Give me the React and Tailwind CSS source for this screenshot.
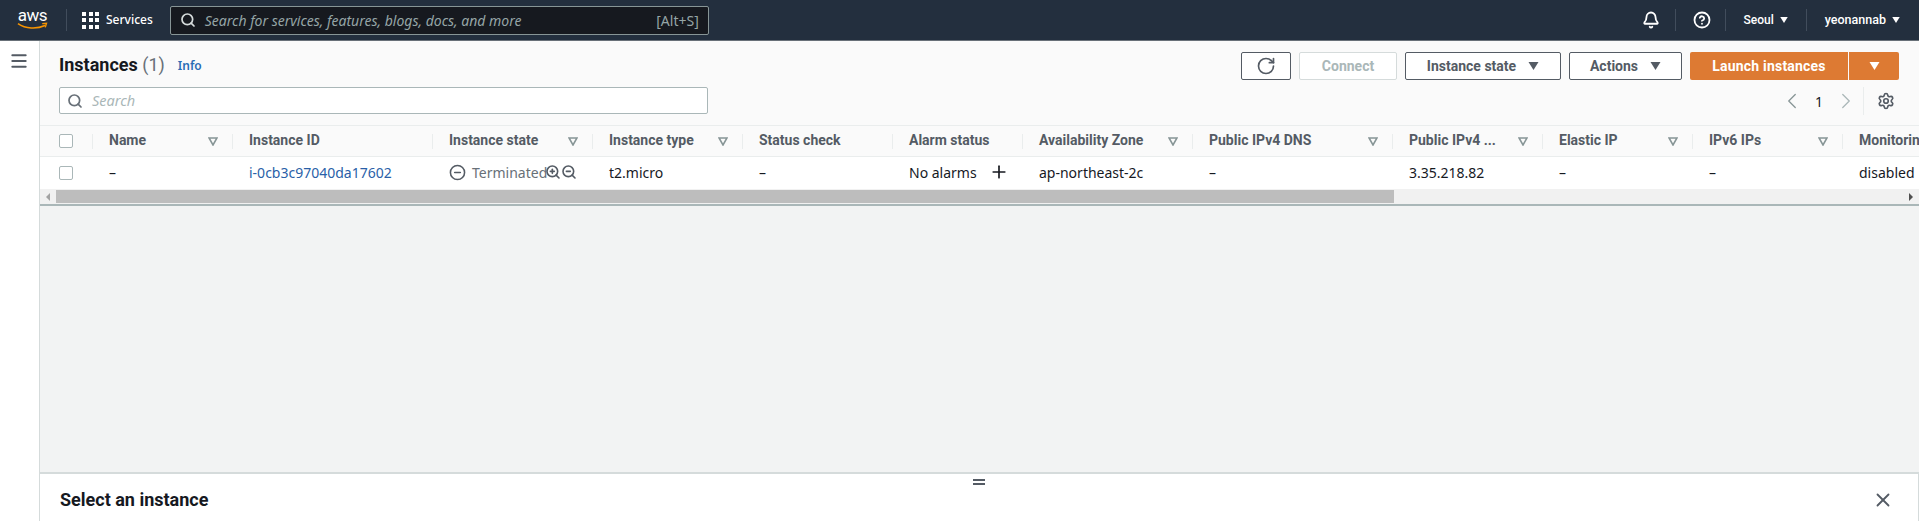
import { Bell, CircleHelp, CircleMinus, ChevronLeft, ChevronRight, Menu, Plus, RotateCw, Search, Settings, X, ZoomIn, ZoomOut } from 'lucide-react'

const columns = [
  { label: 'Name', w: 'w-[140px]', filter: true, cell: '–' },
  { label: 'Instance ID', w: 'w-[200px]', cell: 'i-0cb3c97040da17602', link: true },
  { label: 'Instance state', w: 'w-[160px]', filter: true, state: true },
  { label: 'Instance type', w: 'w-[150px]', filter: true, cell: 't2.micro' },
  { label: 'Status check', w: 'w-[150px]', cell: '–' },
  { label: 'Alarm status', w: 'w-[130px]', alarm: true },
  { label: 'Availability Zone', w: 'w-[170px]', filter: true, cell: 'ap-northeast-2c' },
  { label: 'Public IPv4 DNS', w: 'w-[200px]', filter: true, cell: '–' },
  { label: 'Public IPv4 ...', w: 'w-[150px]', filter: true, cell: '3.35.218.82' },
  { label: 'Elastic IP', w: 'w-[150px]', filter: true, cell: '–' },
  { label: 'IPv6 IPs', w: 'w-[150px]', filter: true, cell: '–' },
  { label: 'Monitoring', w: 'w-[150px]', cell: 'disabled' },
]

function Caret({ className }) {
  return (
    <svg viewBox="0 0 10 8" className={className} fill="currentColor">
      <path d="M0 0h10L5 8z" />
    </svg>
  )
}

function FilterIcon() {
  return (
    <svg viewBox="0 0 10 9" className="w-[10px] h-[9px] shrink-0 text-[#879596]" fill="none" stroke="currentColor" strokeWidth="1.6">
      <path d="M1 1h8L5 8z" />
    </svg>
  )
}

function Checkbox() {
  return <div className="w-[14px] h-[14px] rounded-[2px] border border-[#aab7b8] bg-white" />
}

function TopBar() {
  return (
    <header className="h-[41px] shrink-0 bg-[#232f3e] border-b border-[#687078] flex items-center text-white">
      <div className="w-[66px] shrink-0 flex justify-start pl-[17px]">
        <div className="relative w-[31px] h-[28px]">
          <span className="block text-center text-[17px] leading-[18px] tracking-[-0.5px] font-['Roboto',sans-serif]">aws</span>
          <svg viewBox="0 0 32 9" className="absolute left-0 top-[16px] w-[31px] h-[9px]" fill="none">
            <path d="M1 1.5C9 7 20 7.5 29 3.5" stroke="#f79400" strokeWidth="1.6" />
            <path d="M26 1.5l4.5-.3-1.3 4.2" stroke="#f79400" strokeWidth="1.4" />
          </svg>
        </div>
      </div>
      <div className="w-px h-[22px] bg-[#414d5c]" />
      <div className="ml-[15px] grid grid-cols-3 gap-[2.5px] w-[17px]">
        {[...Array(9)].map((_, i) => <div key={i} className="w-[4px] h-[4px] bg-white" />)}
      </div>
      <span className="ml-[7px] text-[12px] font-medium">Services</span>
      <div className="ml-[17px] w-[539px] h-[29px] rounded-[2px] border border-[#879596] bg-[#16191f] flex items-center pl-[9px] pr-[9px]">
        <Search size={16} strokeWidth={2.6} className="text-[#d5dbdb]" />
        <span className="ml-[9px] text-[14px] italic text-[#95a5a6]">Search for services, features, blogs, docs, and more</span>
        <span className="ml-auto text-[14px] text-[#95a5a6]">[Alt+S]</span>
      </div>
      <div className="ml-auto flex items-center h-[22px]">
        <Bell size={18} strokeWidth={2.4} />
        <div className="ml-[15px] w-px h-full bg-[#414d5c]" />
        <CircleHelp size={18} strokeWidth={2.4} className="ml-[17px]" />
        <div className="ml-[14px] w-px h-full bg-[#414d5c]" />
        <span className="ml-[18px] text-[12px] font-medium font-['Roboto',sans-serif]">Seoul</span>
        <Caret className="ml-[6px] w-[8px] h-[6px]" />
        <div className="ml-[18px] w-px h-full bg-[#414d5c]" />
        <span className="ml-[18px] text-[12.5px] font-medium font-['Roboto',sans-serif]">yeonannab</span>
        <Caret className="ml-[6px] mr-[19px] w-[8px] h-[6px]" />
      </div>
    </header>
  )
}

function OutlineButton({ children, className }) {
  return (
    <button className={`h-[28px] rounded-[2px] border border-[#545b64] bg-white text-[#545b64] text-[14px] font-bold font-['Roboto',sans-serif] flex items-center justify-center ${className}`}>
      {children}
    </button>
  )
}

function Toolbar() {
  return (
    <div className="h-[84px] shrink-0 bg-[#fafafa] pl-[19px] pr-[20px] pt-[11px] flex flex-col">
      <div className="flex items-center h-[28px]">
        <h1 className="text-[18px] leading-[26px] mb-[2px] font-bold text-[#16191f] font-['Roboto',sans-serif]">Instances <span className="font-normal text-[#687078]">(1)</span></h1>
        <a className="ml-[13px] text-[12px] font-semibold text-[#2a6db5]">Info</a>
        <div className="ml-auto flex items-center gap-[8px]">
          <OutlineButton className="w-[50px]"><RotateCw size={20} strokeWidth={2} /></OutlineButton>
          <button className="h-[28px] w-[98px] rounded-[2px] border border-[#d5dbdb] bg-white text-[#aab7b8] text-[14px] font-bold font-['Roboto',sans-serif]">Connect</button>
          <OutlineButton className="w-[156px] gap-[12px]">Instance state <Caret className="w-[11px] h-[8px]" /></OutlineButton>
          <OutlineButton className="w-[113px] gap-[12px]">Actions <Caret className="w-[11px] h-[8px]" /></OutlineButton>
          <div className="flex gap-px">
            <button className="h-[28px] w-[158px] rounded-l-[2px] bg-[#dd7a33] text-white text-[14px] font-bold font-['Roboto',sans-serif] tracking-[0.2px]">Launch instances</button>
            <button className="h-[28px] w-[50px] rounded-r-[2px] bg-[#dd7a33] text-white flex items-center justify-center"><Caret className="w-[11px] h-[8px]" /></button>
          </div>
        </div>
      </div>
      <div className="flex items-start mt-[7px]">
        <div className="w-[649px] h-[27px] rounded-[2px] border border-[#aab7b8] bg-white flex items-center pl-[7px]">
          <Search size={16} strokeWidth={2.6} className="text-[#687078]" />
          <span className="ml-[9px] text-[14.5px] italic text-[#aab7b8]">Search</span>
        </div>
        <div className="ml-auto flex items-center h-[28px]">
          <ChevronLeft size={26} strokeWidth={1.2} className="text-[#879596]" />
          <span className="ml-[8px] w-[12px] text-center text-[14px] text-[#16191f]">1</span>
          <ChevronRight size={26} strokeWidth={1.2} className="ml-[8px] text-[#aab7b8]" />
          <div className="ml-[4px] w-px h-full bg-[#eaeded]" />
          <Settings size={18} strokeWidth={2.2} className="ml-[13px] mr-[4px] text-[#545b64]" />
        </div>
      </div>
    </div>
  )
}

function InstanceTable() {
  return (
    <div className="shrink-0 overflow-hidden">
      <div className="h-[32px] flex items-center bg-[#fafafa] border-y border-[#eaeded]">
        <div className="w-[53px] shrink-0 h-[15px] pl-[19px] border-r border-[#eaeded] flex items-center"><Checkbox /></div>
        {columns.map((c) => (
          <div key={c.label} className={`${c.w} shrink-0 h-[15px] pl-[16px] pr-[14px] border-r border-[#eaeded] flex items-center justify-between`}>
            <span className="text-[14px] leading-[15px] font-bold text-[#545b64] whitespace-nowrap font-['Roboto',sans-serif] mb-[1px]">{c.label}</span>
            {c.filter && <FilterIcon />}
          </div>
        ))}
      </div>
      <div className="h-[32px] flex items-center bg-white text-[14px] text-[#16191f]">
        <div className="w-[53px] shrink-0 pl-[19px]"><Checkbox /></div>
        {columns.map((c) => (
          <div key={c.label} className={`${c.w} shrink-0 pl-[16px] pb-[2px] whitespace-nowrap flex items-center`}>
            {c.link && <span className="text-[#2a5fa8]">{c.cell}</span>}
            {c.state && (
              <>
                <CircleMinus size={17} strokeWidth={2.2} className="text-[#545b64]" />
                <span className="ml-[6px] text-[#687078]">Terminated</span>
                <ZoomIn size={16} strokeWidth={2.4} className="ml-[-2px] text-[#545b64]" />
                <ZoomOut size={16} strokeWidth={2.4} className="text-[#545b64]" />
              </>
            )}
            {c.alarm && (
              <>
                <span>No alarms</span>
                <Plus size={20} strokeWidth={2} className="ml-[12px]" />
              </>
            )}
            {!c.link && !c.state && !c.alarm && c.cell}
          </div>
        ))}
      </div>
      <div className="h-[17px] bg-[#f1f1f1] flex items-center border-b-2 border-[#aab7b8]">
        <div className="w-[16px] flex justify-center"><div className="border-y-[4px] border-r-[4px] border-y-transparent border-r-[#a3a3a3]" /></div>
        <div className="w-[1338px] h-[13px] bg-[#bdbdbd]" />
        <div className="ml-auto w-[16px] flex justify-center"><div className="border-y-[4px] border-l-[4px] border-y-transparent border-l-[#505050]" /></div>
      </div>
    </div>
  )
}

export default function App() {
  return (
    <div className="h-[521px] flex flex-col overflow-hidden bg-white font-['Noto_Sans',sans-serif]">
      <TopBar />
      <div className="flex flex-1 min-h-0">
        <aside className="w-[40px] shrink-0 bg-white border-r border-[#d5dbdb] pt-[10px] pl-[9px]">
          <Menu size={20} strokeWidth={2.4} className="text-[#545b64]" />
        </aside>
        <main className="flex-1 min-w-0 flex flex-col">
          <Toolbar />
          <InstanceTable />
          <div className="flex-1 bg-[#f2f3f3]" />
          <section className="h-[49px] shrink-0 bg-white border-t-2 border-r border-t-[#d5dbdb] border-r-[#d5dbdb] relative flex items-center justify-between pl-[20px] pr-[24px] pt-[4px]">
            <h2 className="text-[18px] font-bold text-[#16191f] font-['Roboto',sans-serif]">Select an instance</h2>
            <div className="absolute left-[933px] top-[5px] w-[12px] flex flex-col gap-[2px]">
              <div className="h-[2px] bg-[#545b64]" />
              <div className="h-[2px] bg-[#545b64]" />
            </div>
            <X size={22} strokeWidth={2} className="text-[#545b64]" />
          </section>
        </main>
      </div>
    </div>
  )
}
